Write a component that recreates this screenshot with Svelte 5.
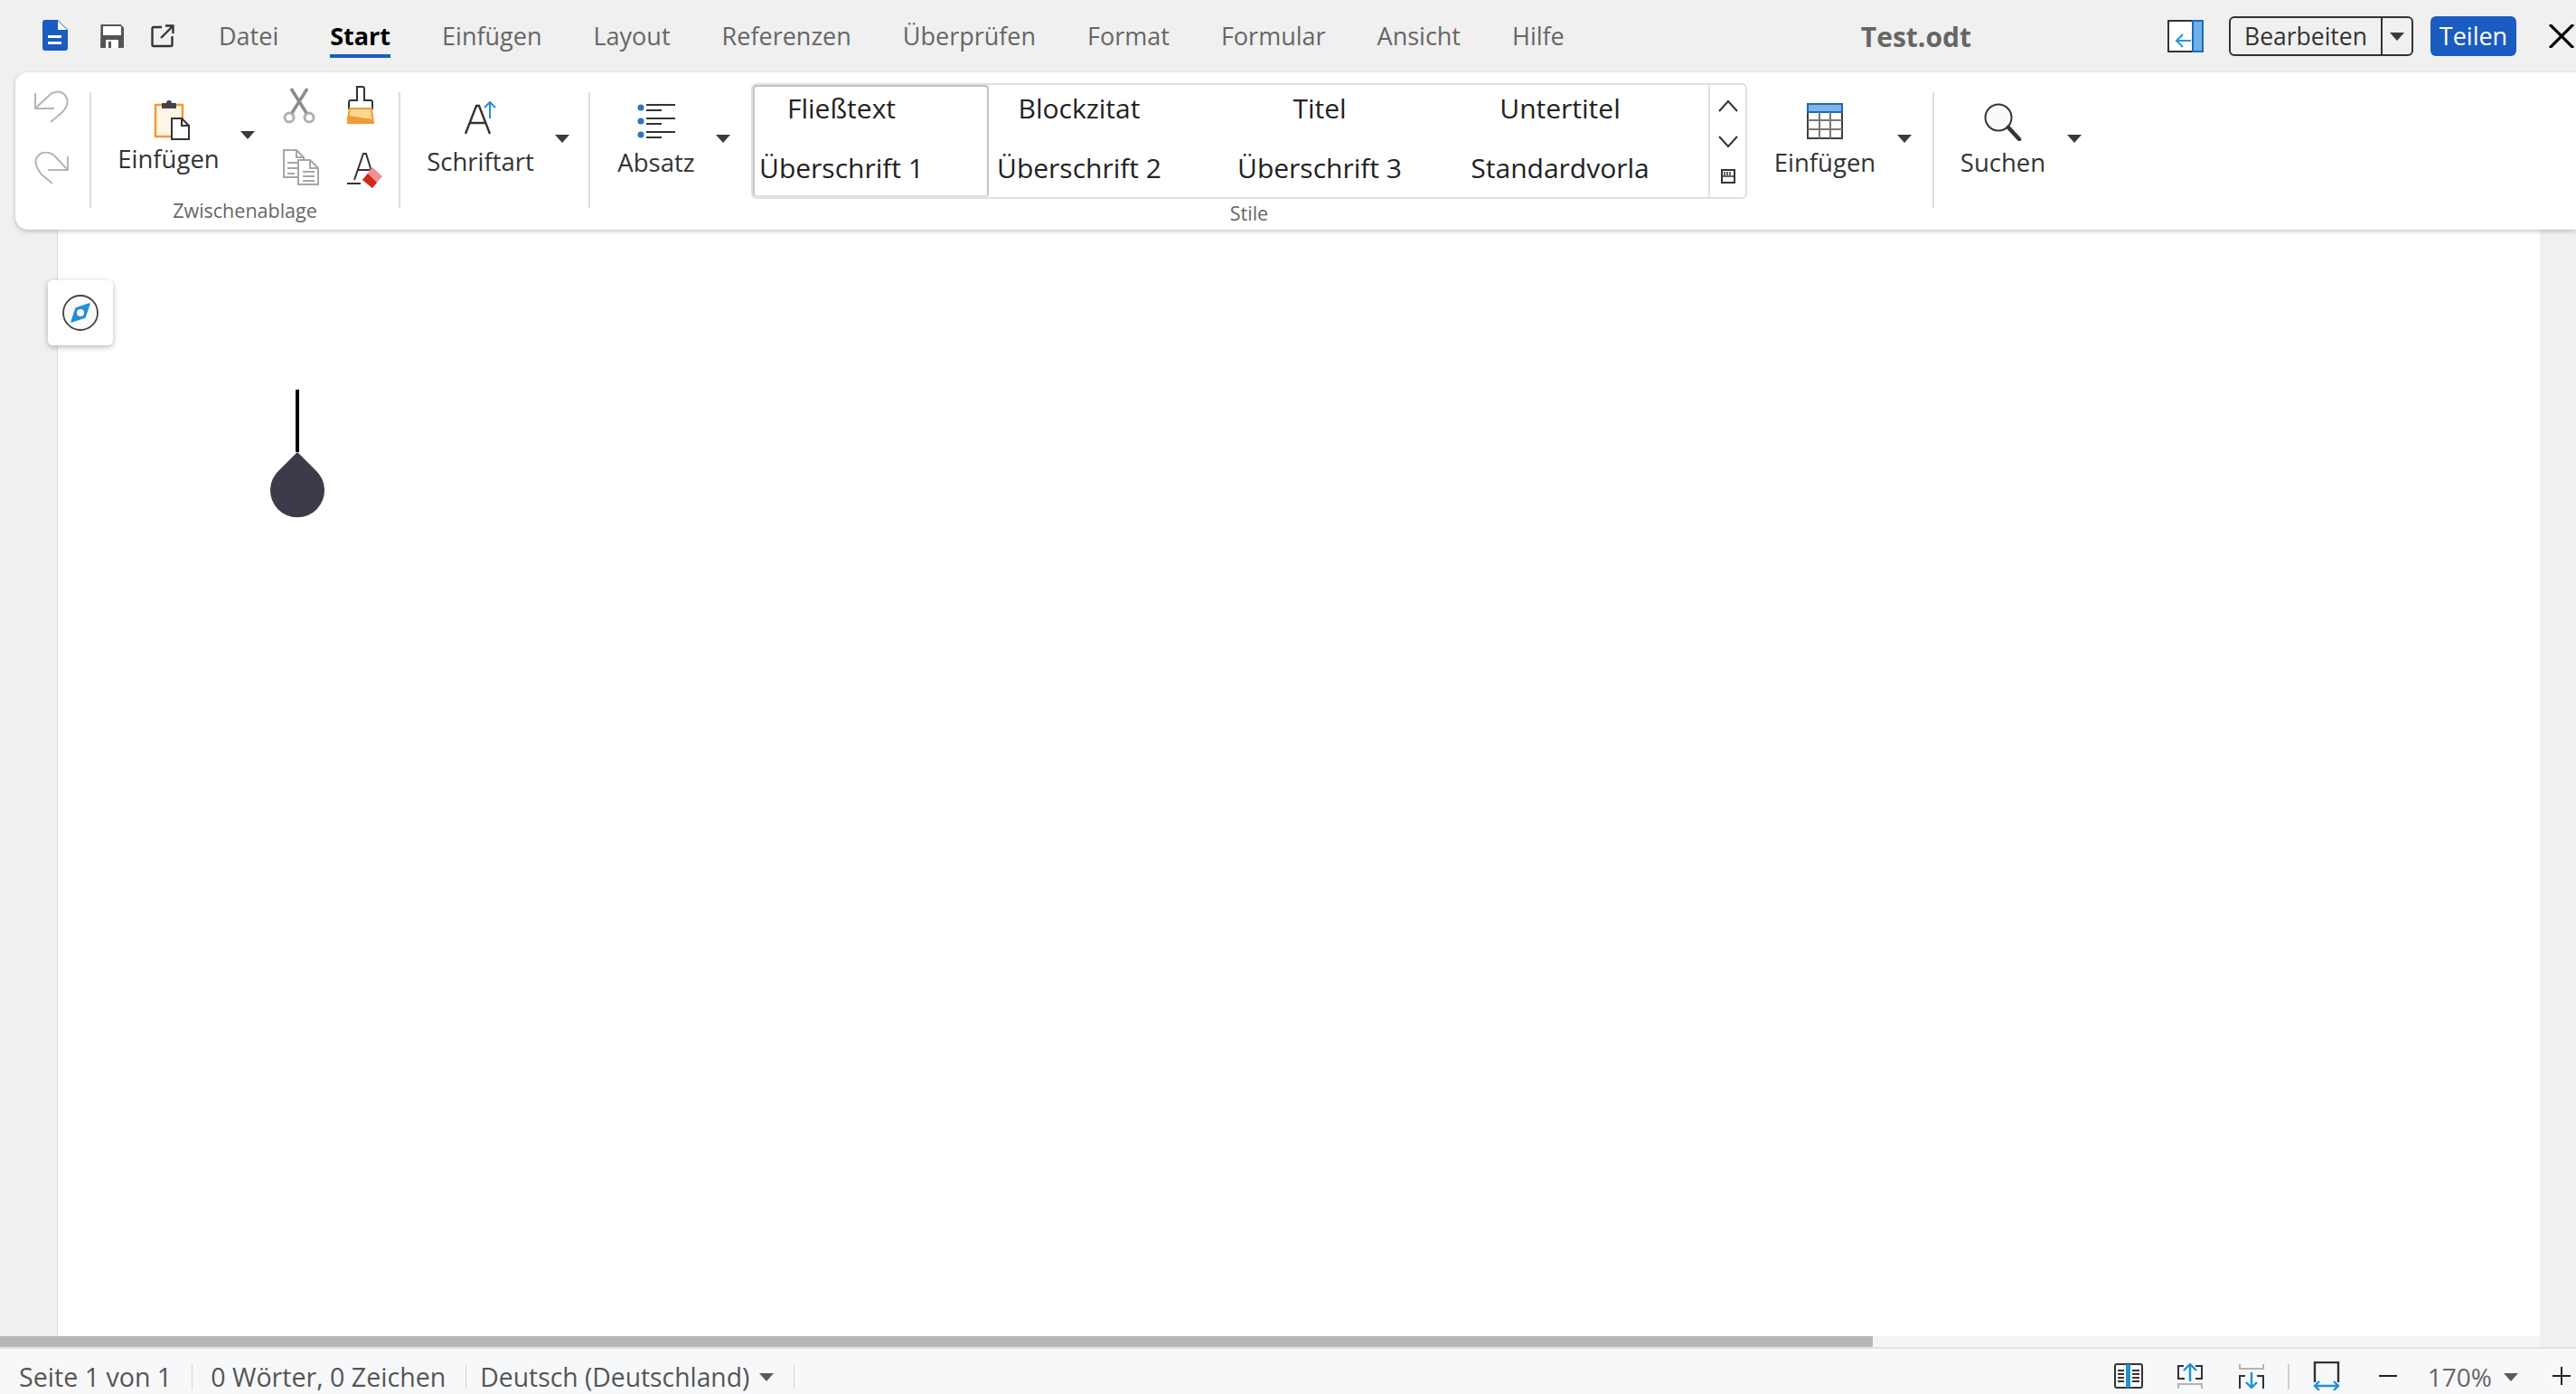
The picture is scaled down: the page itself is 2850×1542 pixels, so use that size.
<script>
  const tabs = ['Datei','Start','Einfügen','Layout','Referenzen','Überprüfen','Format','Formular','Ansicht','Hilfe'];
  const styles = [['Fließtext','Überschrift 1'],['Blockzitat','Überschrift 2'],['Titel','Überschrift 3'],['Untertitel','Standardvorla']];
</script>

<div class="app">
  <header class="top">
    <div class="quick">
      <svg class="i-doc" width="28" height="34" viewBox="0 0 28 34"><path d="M3 0h14l11 11v20a3 3 0 0 1-3 3H3a3 3 0 0 1-3-3V3a3 3 0 0 1 3-3z" fill="#1a5cbf"/><path d="M17 1v10h10z" fill="#fff"/><rect x="6" y="17" width="15" height="3" fill="#fff"/><rect x="6" y="24" width="15" height="3" fill="#fff"/></svg>
      <svg class="i-save" width="28" height="28" viewBox="0 0 28 28"><path d="M1.500 1h22l3.500 3.500V26a1 1 0 0 1-1 1H2a1 1 0 0 1-1-1z" fill="#555" /><rect x="4" y="3" width="20" height="10" fill="#fff"/><rect x="7" y="18" width="14" height="9" fill="#fff"/><rect x="10" y="20" width="3" height="7" fill="#555"/></svg>
      <svg class="i-open" width="26" height="26" viewBox="0 0 26 26" fill="none" stroke="#333" stroke-width="2.400"><path d="M12 3H3a1.500 1.500 0 0 0-1.500 1.500v18A1.500 1.500 0 0 0 3 24h19a1.500 1.500 0 0 0 1.500-1.500V13"/><path d="M11 15 24 2M16 1.500h8.500V10"/></svg>
    </div>
    <nav class="tabs">
      {#each tabs as t}
        <span class="tab" class:active={t === 'Start'}>{t}</span>
      {/each}
    </nav>
    <div class="title">Test.odt</div>
    <div class="actions">
      <svg class="i-panel" width="40" height="36" viewBox="0 0 40 36"><rect x="1" y="1" width="38" height="34" fill="#fff" stroke="#333" stroke-width="2"/><rect x="28" y="1" width="11" height="34" fill="#6fb0e6" stroke="#1a6cb5" stroke-width="2"/><path d="M26 23H11M17 16l-7 7 7 7" fill="none" stroke="#2a95d8" stroke-width="2"/></svg>
      <div class="edit"><span class="edit-l">Bearbeiten</span><span class="edit-r"><i class="caret"></i></span></div>
      <div class="share">Teilen</div>
      <svg class="i-x" width="28" height="26" viewBox="0 0 28 26"><path d="M1 0l26 26M27 0 1 26" stroke="#000" stroke-width="3.200"/></svg>
    </div>
  </header>

  <section class="ribbon">
    <div class="hist">
      <svg width="38" height="36" viewBox="0 0 38 36" fill="none" stroke="#b4b4b4" stroke-width="2"><path d="M1 3v17h21M1 20 17 5C24-1 33 1 36 9c2 6-2 12-6 16L18 35"/></svg>
      <svg width="38" height="36" viewBox="0 0 38 36" fill="none" stroke="#b4b4b4" stroke-width="2"><path d="M37 5v15H15M37 20 22 4C14-2 5 0 2 8c-2 6 2 12 6 17l12 10"/></svg>
    </div>
    <div class="sep"></div>
    <div class="group clip">
      <div class="clip-row">
        <div class="big paste">
          <svg class="ic" width="40" height="44" viewBox="0 0 40 44"><rect x="2" y="5" width="30" height="35" fill="#fff6e5" stroke="#f09a37" stroke-width="2.500"/><rect x="9" y="3" width="16" height="6" fill="#444"/><circle cx="17" cy="3" r="3" fill="#444"/><path d="M20 20h11l8 8v15H20z" fill="#fff" stroke="#333" stroke-width="2"/><path d="M31 20v8h8" fill="none" stroke="#333" stroke-width="2"/></svg>
          <span class="lbl">Einfügen</span>
        </div>
        <i class="caret rb c1"></i>
        <div class="mini">
          <svg width="36" height="40" viewBox="0 0 36 40" fill="none"><circle cx="7" cy="33" r="5" stroke="#b0b0b0" stroke-width="3"/><circle cx="29" cy="33" r="5" stroke="#b0b0b0" stroke-width="3"/><path d="M10 28 27 1M26 28 9 1" stroke="#8c8c8c" stroke-width="3.500"/></svg>
          <svg width="40" height="40" viewBox="0 0 40 40" fill="#fff" stroke="#a6a6a6" stroke-width="2"><path d="M1 1h14l8 8v22H1z"/><path d="M15 1v8h8M5 15h12M5 21h12M5 27h8" fill="none"/><path d="M17 12h13l9 9v18H17z"/><path d="M30 12v9h9M22 25h13M22 30h13M22 35h13" fill="none"/></svg>
        </div>
        <div class="mini m2">
          <svg width="30" height="42" viewBox="0 0 30 42"><path d="M11 1h6a2 2 0 0 1 2 2v13h7a2 2 0 0 1 2 2v7H2v-7a2 2 0 0 1 2-2h7V3z" fill="#fff" stroke="#333" stroke-width="2"/><path d="M3 25h24l2 16H0z" fill="#fbd88f" stroke="#f09a37" stroke-width="2"/><path d="M2 33l26 4v4H1z" fill="#f09a37"/></svg>
          <svg width="40" height="40" viewBox="0 0 40 40"><path d="M8 31 18 2h3l8 26M12 20h13" fill="none" stroke="#333" stroke-width="2"/><rect x="0" y="34" width="15" height="2" fill="#333"/><path d="M28 17l11 10-11 13-11-9z" fill="#f28f93"/><path d="M17 31l6-7 10 10-5 6z" fill="#cf2a1c"/></svg>
        </div>
      </div>
      <div class="cap">Zwischenablage</div>
    </div>
    <div class="sep"></div>
    <div class="group font">
      <div class="big">
        <svg class="ic i-font" width="36" height="38" viewBox="0 0 36 38"><path d="M1 37 13 6h3l12 31M6 25h17" fill="none" stroke="#333" stroke-width="2.400"/><path d="M28 20V2M22 8l6-6 6 6" fill="none" stroke="#2a8fd4" stroke-width="2"/></svg>
        <span class="lbl">Schriftart</span>
      </div>
      <i class="caret rb"></i>
    </div>
    <div class="sep"></div>
    <div class="group para">
      <div class="big">
        <svg class="ic" width="42" height="40" viewBox="0 0 42 40"><g fill="#2a75c0"><circle cx="4" cy="5" r="3.500"/><circle cx="4" cy="20" r="3.500"/><circle cx="4" cy="35" r="3.500"/></g><g stroke="#333" stroke-width="2"><path d="M10 2h32M10 8h17M10 17h32M10 23h17M10 32h32M10 38h17"/></g></svg>
        <span class="lbl">Absatz</span>
      </div>
      <i class="caret rb"></i>
    </div>
    <div class="group styles">
      <div class="gallery">
        <div class="grid">
          {#each styles as col, i}
            <div class="col" class:sel={i === 0}>
              <span class="st">{col[0]}</span>
              <span class="st">{col[1]}</span>
            </div>
          {/each}
        </div>
        <div class="scroll">
          <svg width="24" height="14" viewBox="0 0 24 14" fill="none" stroke="#333" stroke-width="2"><path d="M2 13 12 2l10 11"/></svg>
          <svg width="24" height="14" viewBox="0 0 24 14" fill="none" stroke="#333" stroke-width="2"><path d="M2 1l10 11L22 1"/></svg>
          <svg width="16" height="16" viewBox="0 0 16 16"><rect x="1" y="1" width="14" height="14" fill="#fff" stroke="#333" stroke-width="2"/><path d="M4 3v4M7 3v4M10 3v4M1 8h14" stroke="#333" stroke-width="1.500"/></svg>
        </div>
      </div>
      <div class="cap stile">Stile</div>
    </div>
    <div class="group tbl">
      <div class="big">
        <svg class="ic" width="40" height="40" viewBox="0 0 40 40"><rect x="1" y="1" width="38" height="38" fill="#fff" stroke="#3f3f3f" stroke-width="2"/><rect x="1" y="1" width="38" height="9" fill="#7cb4e6" stroke="#1a6cb5" stroke-width="2"/><path d="M14 10v29M26 10v29M1 19h38M1 29h38" stroke="#777" stroke-width="2"/></svg>
        <span class="lbl">Einfügen</span>
      </div>
      <i class="caret rb"></i>
    </div>
    <div class="sep"></div>
    <div class="group find">
      <div class="big">
        <svg class="ic" width="42" height="42" viewBox="0 0 42 42"><circle cx="16" cy="16" r="14.500" fill="#fafafa" stroke="#333" stroke-width="2"/><path d="M27 27 39 40" stroke="#333" stroke-width="4.500" stroke-linecap="round"/></svg>
        <span class="lbl">Suchen</span>
      </div>
      <i class="caret rb"></i>
    </div>
  </section>

  <main class="doc">
    <div class="page">
      <div class="nav-card">
        <svg width="40" height="40" viewBox="0 0 40 40"><circle cx="20" cy="20" r="19" fill="#fafafa" stroke="#444" stroke-width="1.800"/><path d="M30 10 25 25 10 30 15 15z" fill="#2090d8" stroke="#2090d8" stroke-width="1.500" stroke-linejoin="round"/><circle cx="20" cy="20" r="4" fill="#fafafa"/></svg>
      </div>
      <svg class="handle" width="60" height="142" viewBox="0 0 60 142"><rect x="28" width="4" height="69" fill="#000"/><path d="M30 69 50 89a30 30 0 1 1-40 0z" fill="#3e3a4a"/></svg>
    </div>
  </main>

  <div class="hscroll"><div class="thumb"></div></div>

  <footer class="status">
    <span class="s s1">Seite 1 von 1</span><b class="vsep"></b>
    <span class="s s2">0 Wörter, 0 Zeichen</span><b class="vsep v2"></b>
    <span class="s s3">Deutsch (Deutschland)</span><i class="caret gray"></i><b class="vsep v3"></b>
    <div class="spacer"></div>
    <svg class="si book" width="32" height="28" viewBox="0 0 32 28"><rect x="1" y="1" width="30" height="26" rx="2" fill="#fff" stroke="#333" stroke-width="2"/><rect x="13" y="1" width="5" height="26" fill="#2090d8"/><path d="M4 8h7M4 12h7M4 16h7M4 20h7M20 8h8M20 12h8M20 16h8M20 20h8" stroke="#333" stroke-width="2"/></svg>
    <svg class="si up" width="28" height="28" viewBox="0 0 28 28" fill="none"><path d="M7 3H1v14h7M20 3h7v14h-7" stroke="#333" stroke-width="2"/><path d="M1 28v-5h26v5" stroke="#b4b4b4" stroke-width="2"/><path d="M14 20V1M7 8l7-7 7 7" stroke="#2090d8" stroke-width="2.400"/></svg>
    <svg class="si down" width="28" height="28" viewBox="0 0 28 28" fill="none"><path d="M7 14H1v14M20 14h7v14" stroke="#333" stroke-width="2"/><path d="M1 1v5h26V1" stroke="#b4b4b4" stroke-width="2"/><path d="M14 10v17M8 21l6 6 6-6" stroke="#2090d8" stroke-width="2.400"/></svg>
    <b class="vsep v4"></b>
    <svg class="si fit" width="30" height="32" viewBox="0 0 30 32" fill="none"><path d="M2 23V1h26v22" stroke="#333" stroke-width="2.400"/><path d="M2 27h26M7 22l-5 5 5 5M23 22l5 5-5 5" stroke="#2090d8" stroke-width="2.400"/></svg>
    <svg class="si minus" width="20" height="2" viewBox="0 0 20 2"><rect width="20" height="2" fill="#222"/></svg>
    <span class="s zoom">170%</span><i class="caret gray z"></i>
    <svg class="si plus" width="20" height="20" viewBox="0 0 20 20"><path d="M0 10h20M10 0v20" stroke="#222" stroke-width="2"/></svg>
  </footer>
</div>

<style>
  :global(body) { margin: 0; }
  .app {
    width: 2850px; height: 1542px; overflow: hidden; display: flex; flex-direction: column;
    background: #f0f0f0; font-family: "Open Sans", "Noto Sans", sans-serif; color: #333;
  }
  svg { display: block; flex: none; }
  .caret { display: block; flex: none; width: 0; height: 0; border-left: 8.500px solid transparent; border-right: 8.500px solid transparent; border-top: 9.500px solid #3a3a3a; }

  .top { height: 80px; flex: none; display: flex; align-items: center; position: relative; }
  .quick { display: flex; align-items: center; padding-left: 47px; width: 242px; box-sizing: border-box; flex: none; }
  .i-doc { margin-top: -2px; }
  .i-save { margin-left: 35px; }
  .i-open { margin-left: 29px; }
  .tabs { display: flex; gap: 57px; font-size: 27px; color: #666; padding-top: 2px; }
  .tab { padding-bottom: 2px; position: relative; line-height: 36px; }
  .tab.active { font-weight: 700; color: #000; }
  .tab.active::after { content: ""; position: absolute; left: 0; right: 0; bottom: -4px; height: 4px; background: #1a5cbf; }
  .title { margin-left: 328px; font-size: 30px; font-weight: 700; color: #666; width: 340px; }
  .actions { display: flex; align-items: center; margin-left: auto; }
  .edit { display: flex; height: 44px; width: 204px; box-sizing: border-box; border: 2px solid #333; border-radius: 6px; margin-left: 28px; }
  .edit-l { width: 166px; text-align: center; font-size: 26.500px; line-height: 40px; border-right: 2px solid #333; }
  .edit-r { flex: 1; display: flex; align-items: center; justify-content: center; }
  .share { width: 95px; height: 44px; margin-left: 19px; background: #1a5cbf; color: #fff; border-radius: 6px; font-size: 27px; line-height: 44px; text-align: center; }
  .i-x { margin: 0 2px 0 36px; }

  .ribbon {
    height: 174px; flex: none; margin-left: 17px; background: #fff; border-radius: 14px 0 0 14px;
    box-shadow: 0 2px 5px rgba(0,0,0,.22); display: flex; align-items: flex-start; position: relative; z-index: 2;
  }
  .hist { width: 82px; box-sizing: border-box; padding: 20px 0 0 21px; display: flex; flex-direction: column; gap: 32px; }
  .sep { width: 2px; height: 128px; margin-top: 22px; background: #dedede; flex: none; }
  .group { position: relative; }
  .big { display: flex; flex-direction: column; align-items: center; }
  .big .ic { margin-bottom: 12px; }
  .lbl { font-size: 27.500px; line-height: 36px; color: #333; white-space: nowrap; }
  .rb { position: relative; }
  .cap { font-size: 21.500px; line-height: 28px; color: #666; text-align: center; }

  .clip { width: 340px; display: flex; flex-direction: column; }
  .clip-row { display: flex; height: 139px; }
  .paste { padding: 31px 0 0 28px; width: 115px; }
  .big.paste .ic { margin: 0 0 3px 6px; }
  .c1 { margin: 65px 0 0 22px; }
  .mini { display: flex; flex-direction: column; margin-left: 31px; padding-top: 17px; gap: 28px; }
  .mini.m2 { margin-left: 31px; padding-top: 15px; gap: 31px; }
  .clip .cap { height: 28px; }

  .font, .para, .tbl, .find { display: flex; padding-top: 31px; }
  .font { width: 208px; box-sizing: border-box; padding-left: 28px; }
  .font .big { width: 121px; }
  .font .caret { margin: 38px 0 0 22px; }
  .para { width: 178px; box-sizing: border-box; padding-left: 27px; padding-top: 34px; }
  .para .big { width: 92px; }
  .para .big .ic { margin-bottom: 8px; }
  .para .caret { margin: 35px 0 0 20px; }

  .styles { width: 1102px; padding-top: 12px; box-sizing: border-box; }
  .gallery { width: 1102px; height: 128px; box-sizing: border-box; border: 2px solid #e0e0e0; border-radius: 6px; display: flex; }
  .grid { display: flex; width: 1057px; flex: none; overflow: hidden; }
  .col { width: 266px; flex: none; box-sizing: border-box; padding-right: 70px; display: flex; flex-direction: column; align-items: center; }
  .col.sel { width: 261px; border: 2px solid #c4c4c4; border-bottom-color: #e0e0e0; border-radius: 4px; margin: 0 2px 0 0; padding: 0 65px 0 0; }
  .st { font-size: 30px; line-height: 40px; color: #222; white-space: nowrap; display: flex; justify-content: center; width: 196px; overflow: hidden; flex: none; }
  .st:first-child { margin-top: 6px; }
  .st + .st { margin-top: 26px; }
  .col.sel .st:first-child { margin-top: 4px; }
  .scroll { flex: 1; border-left: 2px solid #e0e0e0; display: flex; flex-direction: column; align-items: center; padding-top: 16px; gap: 26px; }
  .scroll svg:last-child { margin-top: -3px; }
  .cap.stile { margin-top: 2px; }

  .tbl { width: 205px; padding: 34px 0 0 28px; box-sizing: border-box; }
  .tbl .big { width: 116px; }
  .tbl .big .ic { margin-bottom: 8px; }
  .tbl .caret { margin: 35px 0 0 22px; }
  .find { padding: 34px 0 0 28px; }
  .find .big { width: 96px; }
  .find .big .ic { margin-bottom: 6px; }
  .find .caret { margin: 35px 0 0 23px; }

  .doc { flex: 1; min-height: 0; padding: 0 40px 0 63px; display: flex; }
  .page { flex: 1; background: #fff; border-left: 1px solid #dcdcdc; box-sizing: border-box; position: relative; }
  .nav-card { position: absolute; left: -11px; top: 56px; width: 72px; height: 72px; background: #fff; border-radius: 5px; box-shadow: 0 2px 6px rgba(0,0,0,.28); display: flex; align-items: center; justify-content: center; }
  .handle { position: absolute; left: 235px; top: 177px; }

  .hscroll { height: 12px; flex: none; background: linear-gradient(#f5f5f5, #f5f5f5) 0 0 / 2810px 100% no-repeat #f0f0f0; }
  .thumb { width: 2072px; height: 12px; background: rgba(160,162,160,.75); }

  .status { height: 52px; flex: none; box-sizing: border-box; border-top: 2px solid #e2e2e2; padding-top: 12px; background: #f7f8fa; display: flex; align-items: center; font-size: 28.600px; color: #555; }
  .s { white-space: nowrap; line-height: 36px; }
  .s1 { margin-left: 21px; }
  .s3 { font-size: 28.300px; }
  .vsep { display: block; width: 1px; height: 28px; background: #d4d4d4; margin: 0 20px 0 22px; flex: none; }
  .vsep.v2 { margin-right: 15px; }
  .caret.gray { border-top-color: #5a5a5a; margin: 0 0 0 11px; }
  .vsep.v3 { margin-left: 22px; }
  .spacer { flex: 1; }
  .si { margin-top: -2px; }
  .si.book { margin-right: 38px; }
  .si.up { margin-right: 40px; }
  .vsep.v4 { width: 2px; margin: 0 26px; background: #d0d0d0; }
  .si.fit { margin-right: 43px; }
  .si.minus { margin-right: 34px; }
  .zoom { color: #666; font-size: 28px; }
  .caret.z { margin-left: 13px; margin-right: 38px; }
  .si.plus { margin-right: 6px; }
</style>
